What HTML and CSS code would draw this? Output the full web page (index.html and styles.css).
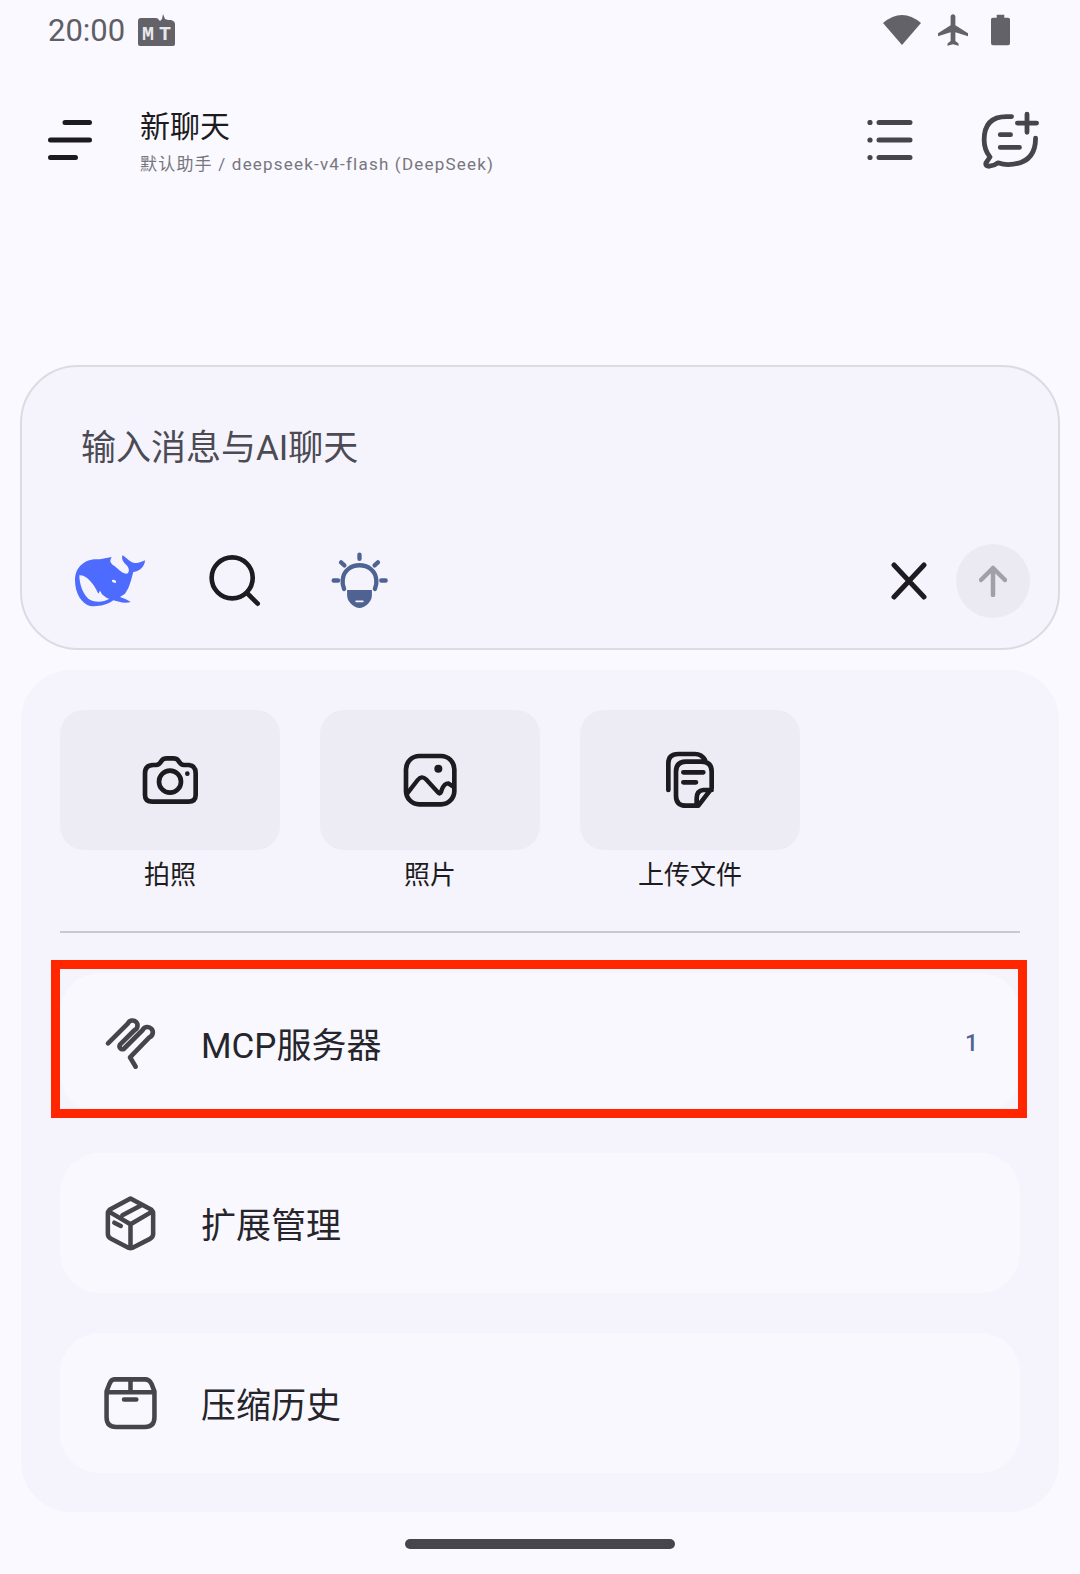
FILE: index.html
```html
<!DOCTYPE html>
<html lang="zh-CN">
<head>
    <meta charset="UTF-8">
    <meta name="viewport" content="width=device-width, initial-scale=1.0">
    <title>新聊天</title>
    <link rel="stylesheet" href="styles.css">
</head>
<body>
    <div class="status-bar">
        <div class="status-left">
            <span class="status-time">20:00</span>
            <svg class="mt-icon" viewBox="0 0 37 32">
                <path d="M0 7q0-3 3-3h15q2 0 3 2l1 1 2-2 1-5 2 5 3 1 3 0q4 1 4 4v20q0 2-2 2H2q-2 0-2-2z" fill="#636268"/>
                <text x="4" y="26" class="mt-text">M</text>
                <text x="21" y="26" class="mt-text">T</text>
            </svg>
        </div>
        <div class="status-right">
            <svg class="wifi-icon" viewBox="0 0 38 32"><path d="M0 9Q19-7 38 9L19 31z" fill="#636268"/></svg>
            <svg class="plane-icon" viewBox="2 2 19 20"><path d="M21 16v-2l-8-5V3.500c0-.83-.67-1.500-1.500-1.500S10 2.670 10 3.500V9l-8 5v2l8-2.500V19l-2 1.500V22l3.500-1 3.500 1v-1.500L13 19v-5.500l8 2.500z" fill="#636268"/></svg>
            <svg class="battery-icon" viewBox="0 0 20 32"><path d="M6 0h8v3h4q2 0 2 2v25q0 2-2 2H2q-2 0-2-2V5q0-2 2-2h4z" fill="#636268"/></svg>
        </div>
    </div>

    <header class="app-bar">
        <svg class="menu-icon" viewBox="0 0 44 40">
            <path d="M17 2.500h24.500M2.500 20h39M2.500 37.500h25" stroke="#1d1b20" stroke-width="5" stroke-linecap="round"/>
        </svg>
        <div class="chat-title">
            <h1>新聊天</h1>
            <p>默认助手 / deepseek-v4-flash (DeepSeek)</p>
        </div>
        <svg class="list-icon" viewBox="0 0 46 40">
            <path d="M12 2.500h31M12 20h31M12 37.500h31" stroke="#46454c" stroke-width="5" stroke-linecap="round"/>
            <circle cx="3" cy="2.500" r="2.600" fill="#46454c"/>
            <circle cx="3" cy="20" r="2.600" fill="#46454c"/>
            <circle cx="3" cy="37.500" r="2.600" fill="#46454c"/>
        </svg>
        <svg class="new-chat-icon" viewBox="600 333 175 172">
            <path d="M695 352H680Q615 352 615 420Q615 450 632 470L620 488Q618 497 630 497Q645 495 655 487Q670 492 685 492Q765 490 765 415M740 345V398M712 371H768M662 405H692M662 442H718" fill="none" stroke="#46454c" stroke-width="14" stroke-linecap="round" stroke-linejoin="round"/>
        </svg>
    </header>

    <div class="chat-space"></div>

    <section class="input-card">
        <div class="input-hint">输入消息与AI聊天</div>
        <div class="input-tools">
            <svg class="whale-icon" viewBox="72 66 216 162">
                <path d="M75 145C75 100 110 78 150 82L185 75C180 85 178 90 190 100C205 110 215 125 228 125C240 125 240 105 225 95C215 85 215 75 218 70C230 78 240 90 250 92C262 95 275 90 285 85C285 100 272 118 250 120C244 140 240 165 225 185L210 195C225 200 235 205 242 210C225 215 205 210 190 205C170 220 140 225 120 222C95 215 75 185 75 145Z" fill="#4d6bfe"/>
                <path d="M88 130C105 128 130 150 145 185C150 180 148 170 155 185C165 195 170 198 178 200C160 212 130 212 115 200C98 185 88 155 88 130Z" fill="#f5f4fd"/>
                <ellipse cx="192" cy="148" rx="7" ry="4" transform="rotate(25 192 148)" fill="#f5f4fd"/>
            </svg>
            <svg class="search-icon" viewBox="475 70 160 160">
                <circle cx="548" cy="142" r="62" fill="none" stroke="#1d1b20" stroke-width="14"/>
                <path d="M595 190L625 220" stroke="#1d1b20" stroke-width="14" stroke-linecap="round"/>
            </svg>
            <svg class="bulb-icon" viewBox="845 65 170 170">
                <path d="M884 175Q878 160 880 148C885 90 975 90 980 148Q982 160 976 175M930 73V85M875 96L885 105M985 96L975 105M853 150H866M995 150H1008" fill="none" stroke="#4f6392" stroke-width="13" stroke-linecap="round"/>
                <path d="M893 178H967V195C967 215 945 232 930 232C915 232 893 215 893 195Z" fill="#4f6392"/>
                <path d="M920 212H940" stroke="#f5f4fd" stroke-width="5" stroke-linecap="round"/>
            </svg>
            <svg class="close-icon" viewBox="0 0 36 38">
                <path d="M3 3L33 35M33 3L3 35" stroke="#1d1b20" stroke-width="5" stroke-linecap="round"/>
            </svg>
            <div class="send-button">
                <svg class="arrow-icon" viewBox="0 0 28 32">
                    <path d="M14 30V3M2 15L14 3L26 15" fill="none" stroke="#a1a0a8" stroke-width="4.500" stroke-linecap="round" stroke-linejoin="round"/>
                </svg>
            </div>
        </div>
    </section>

    <section class="action-panel">
        <div class="tile-grid">
            <div class="tile">
                <div class="tile-box">
                    <svg class="tile-icon" viewBox="60 60 180 180">
                        <path d="M75 130Q75 105 100 105H108Q118 105 125 92Q130 85 140 85H160Q170 85 175 92Q182 105 192 105H205Q227 105 227 130V195Q227 215 205 215H97Q75 215 75 195Z" fill="none" stroke="#1d1b20" stroke-width="14" stroke-linejoin="round"/>
                        <circle cx="150" cy="155" r="33" fill="none" stroke="#1d1b20" stroke-width="14"/>
                        <circle cx="202" cy="131" r="7" fill="#1d1b20"/>
                    </svg>
                </div>
                <span class="tile-label">拍照</span>
            </div>
            <div class="tile">
                <div class="tile-box">
                    <svg class="tile-icon" viewBox="840 60 180 180">
                        <rect x="858" y="78" width="145" height="145" rx="40" fill="none" stroke="#1d1b20" stroke-width="14"/>
                        <circle cx="955" cy="116" r="12" fill="#1d1b20"/>
                        <path d="M862 190L893 150Q905 135 918 148L955 188Q962 195 965 180Q972 160 985 160L1000 170" fill="none" stroke="#1d1b20" stroke-width="13" stroke-linecap="round"/>
                    </svg>
                </div>
                <span class="tile-label">照片</span>
            </div>
            <div class="tile">
                <div class="tile-box">
                    <svg class="tile-icon" viewBox="180 60 180 180">
                        <path d="M205 180V100Q205 72 235 72H285Q305 72 315 90M228 125Q228 95 258 95H305Q335 95 335 125V175L295 227H258Q228 227 228 197ZM335 180H310Q290 182 290 205V227M250 127H310M250 157H288" fill="none" stroke="#1d1b20" stroke-width="14" stroke-linecap="round" stroke-linejoin="round"/>
                    </svg>
                </div>
                <span class="tile-label">上传文件</span>
            </div>
        </div>

        <div class="divider"></div>

        <div class="row-list">
            <div class="menu-row">
                <svg class="mcp-icon" viewBox="0 -6 210 210">
                    <path d="M24 100L84 40A15 15 0 1 1 104 60L60 104A9 9 0 0 0 71 117L128 60A16 16 0 1 1 148 82L90 142L107 170" fill="none" stroke="#46454c" stroke-width="14" stroke-linecap="round" stroke-linejoin="round"/>
                </svg>
                <span class="row-label">MCP服务器</span>
                <span class="row-count">1</span>
                <div class="red-frame"></div>
            </div>
            <div class="menu-row">
                <svg class="row-icon" viewBox="125 72 170 178">
                    <path d="M210 85L275 120Q280 125 280 130V195Q280 205 270 210L215 238Q210 240 205 238L150 210Q140 205 140 195V130Q140 125 145 120ZM142 125L210 165L278 125M210 165V238M185 137L245 105M160 160L180 170" fill="none" stroke="#46454c" stroke-width="14" stroke-linecap="round" stroke-linejoin="round"/>
                </svg>
                <span class="row-label">扩展管理</span>
            </div>
            <div class="menu-row">
                <svg class="row-icon" viewBox="125 615 170 172">
                    <path d="M160 628H255Q268 628 275 642L284 665V745Q284 775 254 775H166Q136 775 136 745V665L145 642Q150 628 160 628ZM136 668H284M210 628V668M190 690H228" fill="none" stroke="#46454c" stroke-width="14" stroke-linecap="round" stroke-linejoin="round"/>
                </svg>
                <span class="row-label">压缩历史</span>
            </div>
        </div>
    </section>

    <div class="home-indicator"></div>
</body>
</html>
```

FILE: styles.css
```css
* {
    margin: 0;
    padding: 0;
    box-sizing: border-box;
    font-family: Roboto, 'Noto Sans CJK SC', sans-serif;
}

html, body {
    width: 1080px;
    height: 1574px;
    overflow: hidden;
}

body {
    background: #faf9ff;
    color: #1d1b20;
}

svg {
    display: block;
    flex-shrink: 0;
}

.status-bar {
    height: 60px;
    display: flex;
    justify-content: space-between;
    align-items: center;
    padding: 0 70px 0 48px;
}

.status-left {
    display: flex;
    align-items: center;
    gap: 13px;
}

.status-time {
    font-size: 31px;
    line-height: 40px;
    padding-top: 2px;
    color: #5f5e66;
}

.mt-icon {
    width: 37px;
    height: 32px;
}

.mt-text {
    font-family: 'Liberation Mono', monospace;
    font-size: 20px;
    font-weight: bold;
    fill: #e8e8ec;
}

.status-right {
    display: flex;
    align-items: center;
}

.wifi-icon {
    width: 38px;
    height: 32px;
    margin-right: 17px;
}

.plane-icon {
    width: 30px;
    height: 32px;
    margin-right: 23px;
}

.battery-icon {
    width: 19px;
    height: 32px;
}

.app-bar {
    height: 120px;
    margin-top: 20px;
    display: flex;
    align-items: center;
    padding: 0 41px 0 48px;
}

.menu-icon {
    width: 44px;
    height: 40px;
    margin-right: 48px;
}

.chat-title {
    flex: 1;
    padding-top: 3px;
}

.chat-title h1 {
    font-size: 30px;
    font-weight: 400;
    line-height: 42px;
}

.chat-title p {
    font-size: 17px;
    line-height: 26px;
    margin-top: 3px;
    letter-spacing: 1.2px;
    color: #77767e;
}

.list-icon {
    width: 46px;
    height: 40px;
    margin-right: 66px;
}

.new-chat-icon {
    width: 60px;
    height: 59px;
    margin-top: -2px;
}

.chat-space {
    height: 165px;
}

.input-card {
    height: 285px;
    margin: 0 20px;
    border: 2px solid #dcdbe3;
    border-radius: 58px;
    background: #f5f4fd;
    display: flex;
    flex-direction: column;
    justify-content: space-between;
    padding: 57px 28px 30px 52px;
}

.input-hint {
    font-size: 35px;
    line-height: 50px;
    color: #4c4b53;
    padding-left: 7px;
}

.input-tools {
    height: 75px;
    display: flex;
    align-items: center;
}

.whale-icon {
    width: 72px;
    height: 54px;
    margin-right: 62px;
}

.search-icon {
    width: 53px;
    height: 53px;
    margin-right: 70px;
}

.bulb-icon {
    width: 57px;
    height: 57px;
    margin-right: auto;
}

.close-icon {
    width: 36px;
    height: 38px;
    margin-right: 29px;
}

.send-button {
    width: 74px;
    height: 74px;
    border-radius: 50%;
    background: #ebeaf2;
    display: flex;
    align-items: center;
    justify-content: center;
}

.arrow-icon {
    width: 28px;
    height: 32px;
}

.action-panel {
    height: 842px;
    margin: 20px 21px 0;
    border-radius: 50px;
    background: #f5f4fd;
    padding: 40px 39px 38px;
}

.tile-grid {
    display: flex;
    gap: 40px;
}

.tile {
    width: 220px;
    display: flex;
    flex-direction: column;
    align-items: center;
}

.tile-box {
    width: 100%;
    height: 140px;
    border-radius: 24px;
    background: #edecf5;
    display: flex;
    align-items: center;
    justify-content: center;
}

.tile-icon {
    width: 60px;
    height: 60px;
}

.tile-label {
    font-size: 26px;
    line-height: 38px;
    margin-top: 6px;
    color: #1d1b20;
}

.divider {
    height: 2px;
    margin: 37px 0 40px;
    background: #c9c8cf;
}

.row-list {
    display: flex;
    flex-direction: column;
    gap: 40px;
}

.menu-row {
    position: relative;
    height: 140px;
    border-radius: 40px;
    background: #f9f8ff;
    display: flex;
    align-items: center;
    padding: 0 42px 0 43px;
}

.row-icon {
    width: 55px;
    height: 58px;
    margin-right: 43px;
}

.mcp-icon {
    width: 70px;
    height: 70px;
    margin: 0 31px 0 -3px;
}

.row-label {
    flex: 1;
    font-size: 35px;
    line-height: 50px;
    padding-top: 8px;
    color: #26252b;
}

.row-count {
    font-size: 23px;
    font-weight: 500;
    color: #4f6392;
}

/* annotation drawn over the first row */
.red-frame {
    position: absolute;
    left: -9px;
    right: -7px;
    top: -13px;
    bottom: -5px;
    border: 9px solid #ff2600;
}

.home-indicator {
    width: 270px;
    height: 10px;
    margin: 27px auto 0;
    border-radius: 5px;
    background: #47464c;
}
```
